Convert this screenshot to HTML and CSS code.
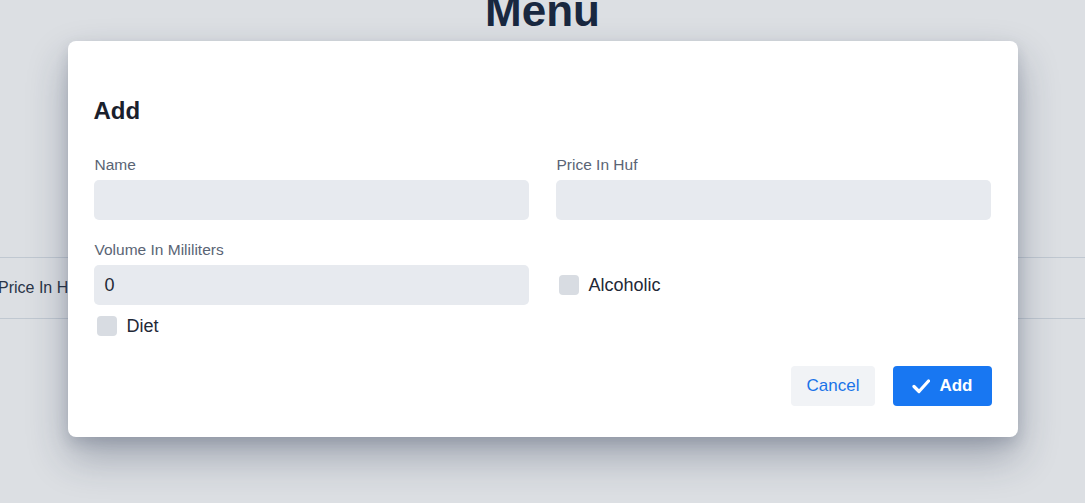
FILE: index.html
```html
<!DOCTYPE html>
<html>
<head>
<meta charset="utf-8">
<link rel="stylesheet" href="styles.css">
</head>
<body>
<div class="page">
  <h1 class="title">Menu</h1>
  <div class="table">
    <div class="row">
      <div class="cell">Price In Huf</div>
    </div>
  </div>
</div>
<div class="overlay">
  <div class="modal">
    <h2 class="modal-title">Add</h2>
    <div class="form">
      <div class="field">
        <label class="label">Name</label>
        <div class="input"></div>
      </div>
      <div class="field">
        <label class="label">Price In Huf</label>
        <div class="input"></div>
      </div>
      <div class="field">
        <label class="label">Volume In Mililiters</label>
        <div class="input">0</div>
      </div>
      <div class="check-cell">
        <span class="checkbox"></span><span class="check-label">Alcoholic</span>
      </div>
      <div class="check-cell diet">
        <span class="checkbox"></span><span class="check-label">Diet</span>
      </div>
    </div>
    <div class="footer">
      <button class="btn cancel">Cancel</button>
      <button class="btn primary"><svg class="check-icon" viewBox="0 0 18 18" width="18" height="18"><path d="M2 9.5 L7 14.5 L16.5 4" fill="none" stroke="#fff" stroke-width="3.2" stroke-linecap="round" stroke-linejoin="round"/></svg>Add</button>
    </div>
  </div>
</div>
</body>
</html>
```
FILE: styles.css
```css
* { box-sizing: border-box; }
html, body { margin: 0; padding: 0; }
body {
  width: 1085px;
  height: 503px;
  overflow: hidden;
  background: #ffffff;
  font-family: "Liberation Sans", Arial, sans-serif;
  color: #1a202c;
  position: relative;
}
.page { width: 100%; }
.title {
  margin: 0;
  margin-top: -14px;
  font-size: 44px;
  line-height: 50px;
  font-weight: 700;
  text-align: center;
  color: #1a2940;
}
.table { margin-top: 221px; }
.row {
  display: flex;
  height: 62px;
  border-top: 1px solid #dfe4ea;
  border-bottom: 1px solid #dfe4ea;
  align-items: center;
}
.cell {
  margin-left: -2px;
  font-size: 16px;
  color: #2d3748;
}
.overlay {
  position: absolute;
  inset: 0;
  background: rgba(20, 40, 70, 0.15);
  display: flex;
  justify-content: center;
  align-items: flex-start;
  padding-top: 41px;
}
.modal {
  width: 950px;
  height: 396px;
  background: #ffffff;
  border-radius: 8px;
  box-shadow: 0 20px 40px rgba(30, 45, 70, 0.32), 0 6px 14px rgba(30, 45, 70, 0.14);
  padding: 56px 27px 31px 26px;
  display: flex;
  flex-direction: column;
}
.modal-title {
  margin: 0;
  font-size: 24px;
  line-height: 28px;
  font-weight: 700;
  color: #1a202c;
}
.form {
  margin-top: 31px;
  display: grid;
  grid-template-columns: 435px 435px;
  column-gap: 27px;
  row-gap: 21px;
}
.field { display: flex; flex-direction: column; }
.label {
  font-size: 15.5px;
  line-height: 18px;
  color: #5a6474;
  margin-left: 1px;
  margin-bottom: 6px;
}
.input {
  height: 40px;
  background: #e7eaef;
  border-radius: 5px;
  font-size: 18px;
  line-height: 40px;
  padding-left: 11px;
  color: #1f2937;
}
.check-cell {
  display: flex;
  align-items: center;
  align-self: end;
  height: 40px;
  padding-left: 3px;
}
.check-cell.diet {
  margin-top: -10px;
  height: 20px;
}
.checkbox {
  width: 20px;
  height: 20px;
  border-radius: 4px;
  background: #d8dce2;
  margin-right: 10px;
}
.check-label {
  font-size: 18px;
  color: #1f2937;
}
.footer {
  margin-top: auto;
  display: flex;
  justify-content: flex-end;
  gap: 18px;
  margin-right: -1px;
}
.btn {
  height: 40px;
  border: none;
  border-radius: 4px;
  font-family: "Liberation Sans", Arial, sans-serif;
  font-size: 17px;
  display: flex;
  align-items: center;
  padding: 0 16px;
}
.cancel {
  background: #f1f3f6;
  color: #1a73e8;
}
.primary {
  background: #1877f2;
  color: #ffffff;
  font-weight: 700;
  padding: 0 19px;
}
.check-icon { margin-right: 9px; }
```
